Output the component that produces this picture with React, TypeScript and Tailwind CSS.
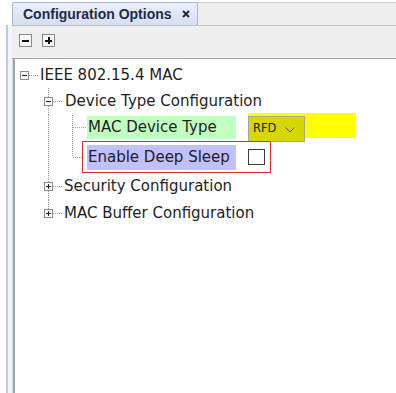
import React from "react";

type Seg = { x: number; y1: number; y2: number };
type HSeg = { x1: number; x2: number; y: number };

const DOT = "#9a9a9a";

function Gutter({
  width,
  height,
  vlines = [],
  hlines = [],
  box,
}: {
  width: number;
  height: number;
  vlines?: Seg[];
  hlines?: HSeg[];
  box?: { x: number; y: number; open: boolean };
}) {
  return (
    <svg width={width} height={height} className="shrink-0" shapeRendering="crispEdges">
      {vlines.map((v, i) => (
        <line key={`v${i}`} x1={v.x + 0.5} x2={v.x + 0.5} y1={v.y1} y2={v.y2} stroke={DOT} strokeDasharray="1 1" />
      ))}
      {hlines.map((h, i) => (
        <line key={`h${i}`} x1={h.x1} x2={h.x2} y1={h.y + 0.5} y2={h.y + 0.5} stroke={DOT} strokeDasharray="1 1" />
      ))}
      {box ? (
        <g>
          <rect x={box.x + 0.5} y={box.y + 0.5} width={8} height={8} fill="#fbfbfb" stroke="#8c8c8c" />
          <line x1={box.x + 2} x2={box.x + 7} y1={box.y + 4.5} y2={box.y + 4.5} stroke="#222" />
          {!box.open ? <line x1={box.x + 4.5} x2={box.x + 4.5} y1={box.y + 2} y2={box.y + 7} stroke="#222" /> : null}
        </g>
      ) : null}
    </svg>
  );
}

function ToolButton({ plus }: { plus?: boolean }) {
  return (
    <div className="relative flex h-[13px] w-[13px] items-center justify-center border border-[#8a8a8a] bg-[#f7f7f7]">
      <div className="h-[2px] w-[7px] bg-[#111]" />
      {plus ? <div className="absolute h-[7px] w-[2px] bg-[#111]" /> : null}
    </div>
  );
}

export default function App() {
  const font = { fontFamily: '"DejaVu Sans", Verdana, sans-serif' };

  return (
    <div className="flex h-[393px] w-[396px] overflow-hidden bg-white">
      {/* outer left strip */}
      <div className="flex w-[12px] flex-col">
        <div className="h-[25px]" />
        <div className="flex flex-1">
          <div className="w-[6px]" />
          <div className="w-[2px] bg-[#b9cde2]" />
          <div className="flex-1 bg-[#f4f7fa]" />
        </div>
      </div>

      <div className="flex flex-1 flex-col">
        {/* tab bar */}
        <div className="flex h-[26px] items-end border-b border-[#b7c2d2]">
          <div
            className="flex h-[23px] w-[186px] items-center rounded-t-[2px] border border-b-0 border-[#a8b5cc] bg-gradient-to-b from-[#ebeff9] to-[#d6def1] pl-[10px]"
            style={{ fontFamily: '"Liberation Sans", Arial, sans-serif' }}
          >
            <span className="text-[14px] font-bold leading-none text-[#1c2b4a]">Configuration Options</span>
            <svg width="8" height="8" className="ml-[10px]" viewBox="0 0 8 8">
              <path d="M1 1 L7 7 M7 1 L1 7" stroke="#2a2a2a" strokeWidth="2" />
            </svg>
          </div>
          <div className="h-[23px] flex-1 border-t border-[#c6ccd6] bg-[#eeeeee]" />
        </div>

        {/* toolbar */}
        <div className="flex h-[33px] items-start gap-[10px] border-b border-[#a6a6a6] bg-[#eeeeee] pl-[7px] pt-[8px]">
          <ToolButton />
          <ToolButton plus />
        </div>

        {/* tree */}
        <div className="flex flex-1">
          <div className="w-[1px] bg-[#cfd6df]" />
          <div className="w-[2px] bg-[#9ea6b2]" />
          <div className="flex flex-1 flex-col pt-[3px] text-[15px] text-[#1e1e1e]" style={font}>
            <div className="flex h-[26px] items-center">
              <Gutter width={25} height={26} hlines={[{ x1: 14, x2: 24, y: 13 }]} box={{ x: 5, y: 9, open: true }} />
              <span>IEEE 802.15.4 MAC</span>
            </div>

            <div className="flex h-[27px] items-center">
              <Gutter
                width={50}
                height={27}
                vlines={[{ x: 33, y1: 0, y2: 9 }, { x: 33, y1: 18, y2: 27 }]}
                hlines={[{ x1: 38, x2: 48, y: 13 }]}
                box={{ x: 29, y: 9, open: true }}
              />
              <span>Device Type Configuration</span>
            </div>

            <div className="flex h-[26px] items-start">
              <Gutter
                width={72}
                height={26}
                vlines={[{ x: 33, y1: 0, y2: 26 }, { x: 57, y1: 0, y2: 26 }]}
                hlines={[{ x1: 58, x2: 71, y: 12 }]}
              />
              <div className="mt-[1px] flex h-[23px] w-[149px] items-center bg-[#c0ffc0] pl-[1px]">MAC Device Type</div>
              <div className="-mt-[2px] ml-[12px] flex h-[25px] w-[108px] flex-col bg-[#ffff00]">
                <div className="mt-[3px] flex h-[26px] w-[57px] shrink-0 items-center border border-[#a9a98e] bg-[#d6d600] pl-[4px]">
                  <span className="text-[11.5px] leading-none text-[#222]">RFD</span>
                  <svg width="10" height="6" viewBox="0 0 10 6" className="ml-[9px] mt-[2px]">
                    <path d="M0.5 0.5 L5 5 L9.5 0.5" fill="none" stroke="#555" strokeWidth="1" />
                  </svg>
                </div>
              </div>
            </div>

            <div className="flex h-[32px] items-center">
              <Gutter
                width={67}
                height={32}
                vlines={[{ x: 33, y1: 0, y2: 32 }, { x: 57, y1: 0, y2: 16 }]}
                hlines={[{ x1: 58, x2: 67, y: 16 }]}
              />
              <div className="flex h-[32px] w-[189px] items-center border border-[#e0262f]">
                <div className="ml-[4px] flex h-[25px] w-[149px] items-center bg-[#c0c0ff] pl-[1px]">Enable Deep Sleep</div>
                <div className="ml-[12px] h-[16px] w-[17px] border border-[#3c3c3c] bg-white" />
              </div>
            </div>

            <div className="flex h-[27px] items-center">
              <Gutter
                width={49}
                height={27}
                vlines={[{ x: 33, y1: 0, y2: 9 }, { x: 33, y1: 18, y2: 27 }]}
                hlines={[{ x1: 38, x2: 48, y: 13 }]}
                box={{ x: 29, y: 9, open: false }}
              />
              <span>Security Configuration</span>
            </div>

            <div className="flex h-[26px] items-center">
              <Gutter
                width={49}
                height={26}
                vlines={[{ x: 33, y1: 0, y2: 9 }]}
                hlines={[{ x1: 38, x2: 48, y: 13 }]}
                box={{ x: 29, y: 9, open: false }}
              />
              <span>MAC Buffer Configuration</span>
            </div>
          </div>
        </div>
      </div>
    </div>
  );
}
